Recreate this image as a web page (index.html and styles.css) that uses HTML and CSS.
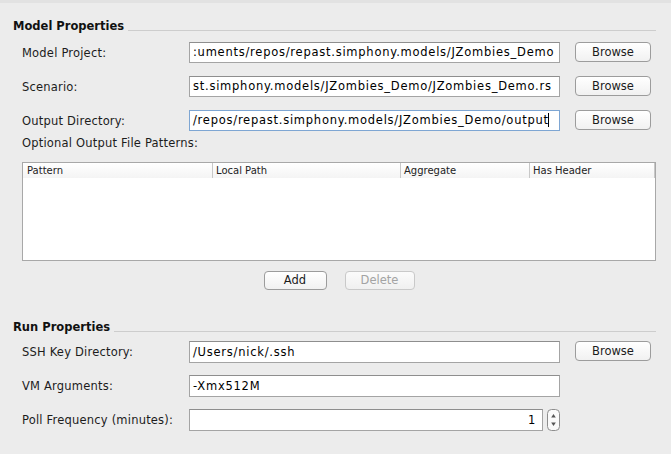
FILE: index.html
```html
<!DOCTYPE html>
<html>
<head>
<meta charset="utf-8">
<link rel="stylesheet" href="styles.css">
</head>
<body>
<div class="topbar"></div>
<section class="section model">
  <div class="section-title"><span>Model Properties</span><div class="rule"></div></div>
  <div class="form">
    <label class="lbl">Model Project:</label>
    <div class="field">:uments/repos/repast.simphony.models/JZombies_Demo</div>
    <button class="btn">Browse</button>

    <label class="lbl">Scenario:</label>
    <div class="field">st.simphony.models/JZombies_Demo/JZombies_Demo.rs</div>
    <button class="btn">Browse</button>

    <label class="lbl">Output Directory:</label>
    <div class="field focused">/repos/repast.simphony.models/JZombies_Demo/output<span class="caret"></span></div>
    <button class="btn">Browse</button>
  </div>
  <div class="sublabel">Optional Output File Patterns:</div>
  <div class="table">
    <div class="thead">
      <div class="th c1">Pattern</div>
      <div class="th c2">Local Path</div>
      <div class="th c3">Aggregate</div>
      <div class="th c4">Has Header</div>
    </div>
    <div class="tbody"></div>
  </div>
  <div class="actions">
    <button class="btn small add">Add</button>
    <button class="btn small del" disabled>Delete</button>
  </div>
</section>
<section class="section run">
  <div class="section-title"><span>Run Properties</span><div class="rule"></div></div>
  <div class="form run-form">
    <label class="lbl">SSH Key Directory:</label>
    <div class="field tall">/Users/nick/.ssh</div>
    <button class="btn">Browse</button>

    <label class="lbl">VM Arguments:</label>
    <div class="field tall">-Xmx512M</div>
    <div></div>

    <label class="lbl">Poll Frequency (minutes):</label>
    <div class="spin-wrap">
      <div class="field tall num">1</div>
      <div class="spinner">
        <svg width="13" height="22" viewBox="0 0 13 22">
          <rect x="0.5" y="0.5" width="12" height="21" rx="4" ry="4" fill="#fafafa" stroke="#8e8e8e"/>
          <path d="M6.5 5 L8.8 8.6 L4.2 8.6 Z" fill="#555"/>
          <path d="M6.5 17 L8.8 13.4 L4.2 13.4 Z" fill="#555"/>
        </svg>
      </div>
    </div>
    <div></div>
  </div>
</section>
</body>
</html>
```
FILE: styles.css
```css
* { box-sizing: border-box; }
html, body { margin: 0; padding: 0; }
body {
  width: 671px;
  height: 454px;
  overflow: hidden;
  background: #ececec;
  font-family: "DejaVu Sans", "Noto Sans", sans-serif;
  font-size: 11.5px;
  color: #1c1c1c;
}
.topbar {
  height: 3px;
  background: #e2e2e2;
}
.section {
  padding: 0 15px 0 13px;
}
.model { padding-top: 16px; }
.run { padding-top: 30px; }
.section-title {
  display: flex;
  align-items: flex-start;
  height: 14px;
  line-height: 14px;
  font-weight: bold;
  font-size: 11.5px;
  color: #111;
}
.section-title .rule {
  flex: 1;
  margin-top: 11px;
  margin-left: 4px;
  height: 1px;
  background: #cdcdcd;
}
.form {
  display: grid;
  grid-template-columns: 167px 371px 91px;
  grid-auto-rows: 21px;
  row-gap: 13px;
  margin-top: 9px;
  padding-left: 9px;
  align-items: start;
}
.run-form {
  margin-top: 7px;
  grid-auto-rows: 22px;
  row-gap: 12px;
}
.lbl {
  align-self: center;
  line-height: 14px;
  white-space: nowrap;
  letter-spacing: 0.2px;
}
.field {
  height: 21px;
  border: 1px solid #a4a4a4;
  border-top-color: #8e8e8e;
  background: #fff;
  padding: 0 3px;
  line-height: 19px;
  white-space: nowrap;
  overflow: hidden;
  color: #000;
  letter-spacing: 0.75px;
}
.field.tall { height: 22px; line-height: 20px; }
.field.focused {
  border-color: #7ea6d3;
}
.caret {
  display: inline-block;
  width: 1px;
  height: 14px;
  background: #000;
  vertical-align: -3px;
  margin-left: -0.5px;
}
.btn {
  justify-self: end;
  width: 76px;
  height: 20px;
  padding: 0;
  border: 1px solid #9c9c9c;
  border-radius: 4px;
  background: linear-gradient(#ffffff, #f1f1f1);
  font-family: inherit;
  font-size: 11.5px;
  color: #1c1c1c;
  line-height: 18px;
}
.sublabel {
  margin-top: 5px;
  padding-left: 9px;
  line-height: 14px;
  letter-spacing: 0.2px;
}
.table {
  margin: 12px 0 0 9px;
  width: 634px;
  height: 99px;
  border: 1px solid #a8a8a8;
  background: #fff;
  display: flex;
  flex-direction: column;
}
.thead {
  display: flex;
  height: 15px;
  background: linear-gradient(#ffffff, #f4f4f4);
  font-size: 10px;
  line-height: 15px;
  color: #222;
}
.th {
  padding-left: 3px;
  border-right: 1px solid #c8c8c8;
}
.th.c1 { width: 190px; padding-left: 4px; }
.th.c2 { width: 188px; }
.th.c3 { width: 129px; }
.th.c4 { width: 125px; }
.tbody { flex: 1; }
.actions {
  display: flex;
  justify-content: center;
  gap: 18px;
  margin: 10px 0 0 9px;
  width: 634px;
}
.btn.small { height: 19px; line-height: 17px; }
.btn.add { width: 63px; }
.btn.del {
  width: 70px;
  color: #a3a3a3;
  border-color: #c9c9c9;
  background: linear-gradient(#fbfbfb, #f0f0f0);
}
.spin-wrap {
  display: flex;
  align-items: flex-start;
  gap: 4px;
}
.spin-wrap .field { width: 356px; text-align: right; padding-right: 6px; }
.spinner { height: 22px; }
.spinner svg { display: block; }
```
